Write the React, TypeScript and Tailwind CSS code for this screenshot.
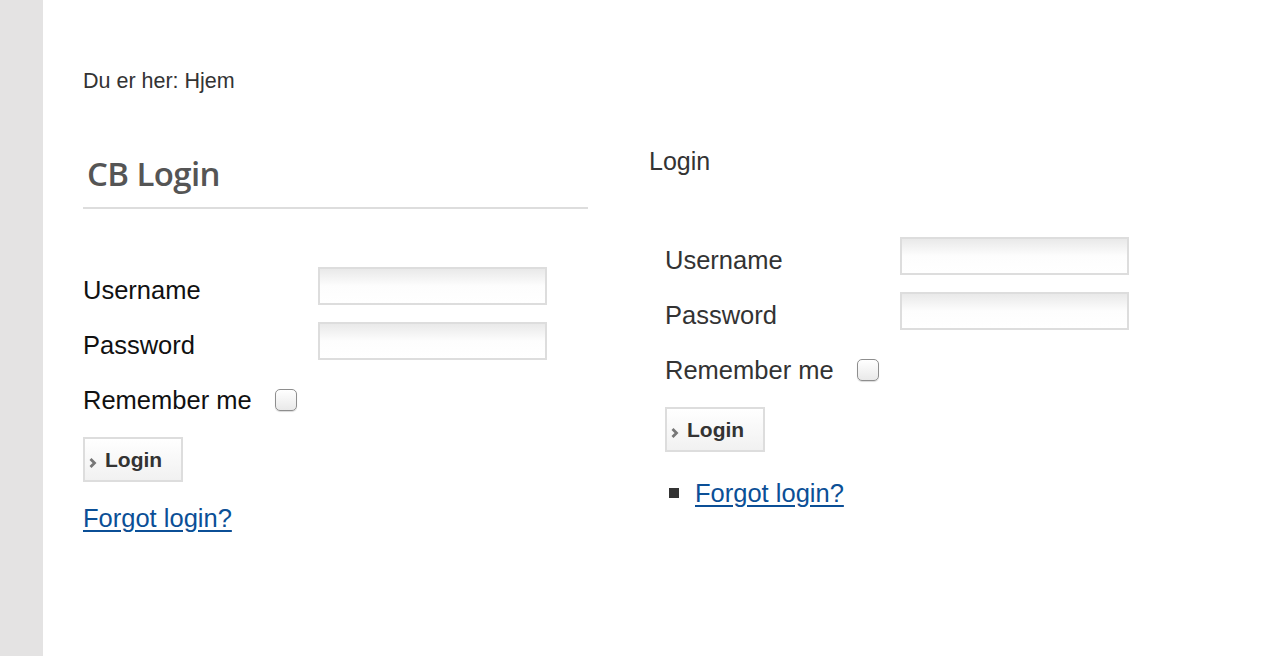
import React from 'react';

const sans = "font-['Liberation_Sans',Arial,sans-serif]";

function TextBox() {
  return (
    <div className="w-[229px] h-[38px] border-2 border-[#dddddd] bg-gradient-to-b from-[#e9e9e9] via-[#fdfdfd] to-white" />
  );
}

function CheckBox() {
  return (
    <span className="block w-[22px] h-[22px] rounded-[5px] border border-[#8e8e8e] bg-gradient-to-b from-white to-[#e9e9e9] shadow-[0_1px_1px_rgba(0,0,0,0.15)]" />
  );
}

function LoginButton() {
  return (
    <button className="w-[100px] h-[45px] border-2 border-[#dddddd] bg-gradient-to-b from-white to-[#f1f1f1] flex items-center pl-[3px] gap-[8px]">
      <svg width="9" height="12" viewBox="0 0 9 12" className="mt-[6px]">
        <path d="M2.5 2 L6.5 6 L2.5 10" fill="none" stroke="#777" strokeWidth="2.8" />
      </svg>
      <span className="text-[21px] font-bold text-[#333] leading-none">Login</span>
    </button>
  );
}

function LoginForm({ color }: { color: string }) {
  return (
    <div className={color}>
      <div className="flex items-start">
        <span className="w-[235px] pt-[9px] text-[25.5px] leading-[28px]">Username</span>
        <TextBox />
      </div>
      <div className="flex items-start mt-[17px]">
        <span className="w-[235px] pt-[9px] text-[25.5px] leading-[28px]">Password</span>
        <TextBox />
      </div>
      <div className="flex items-start mt-[26px]">
        <span className="text-[25.5px] leading-[28px]">Remember me</span>
        <span className="ml-[23px] mt-[3px]">
          <CheckBox />
        </span>
      </div>
      <div className="mt-[23px]">
        <LoginButton />
      </div>
    </div>
  );
}

export default function App() {
  return (
    <div className={`flex min-h-[656px] bg-white ${sans}`}>
      <div className="w-[43px] shrink-0 bg-[#e4e3e3]" />
      <div className="flex-1 pl-[40px] pt-[69px]">
        <p className="text-[21.5px] leading-[24px] text-[#333]">Du er her: Hjem</p>

        <div className="flex items-start mt-[54px]">
          {/* CB Login module */}
          <div className="w-[505px] pt-[7px]">
            <h2 className="font-['Open_Sans',sans-serif] font-semibold text-[33px] leading-[40px] tracking-[-0.6px] text-[#555] pl-[4px] pb-[13px] border-b-2 border-[#dddddd]">
              CB Login
            </h2>
            <div className="mt-[58px]">
              <LoginForm color="text-[#111]" />
            </div>
            <a href="#" className="block mt-[22px] text-[25.5px] leading-[28px] text-[#0b4f96] underline underline-offset-[3px]">
              Forgot login?
            </a>
          </div>

          {/* Login module */}
          <div className="ml-[61px]">
            <h3 className="text-[25px] leading-[28px] text-[#333]">Login</h3>
            <div className="mt-[62px] pl-[16px]">
              <LoginForm color="text-[#333]" />
              <ul className="mt-[27px]">
                <li className="flex items-center">
                  <span className="w-[10px] h-[10px] bg-[#333] ml-[4px] mr-[16px]" />
                  <a href="#" className="text-[25.5px] leading-[28px] text-[#0b4f96] underline underline-offset-[3px]">
                    Forgot login?
                  </a>
                </li>
              </ul>
            </div>
          </div>
        </div>
      </div>
    </div>
  );
}
